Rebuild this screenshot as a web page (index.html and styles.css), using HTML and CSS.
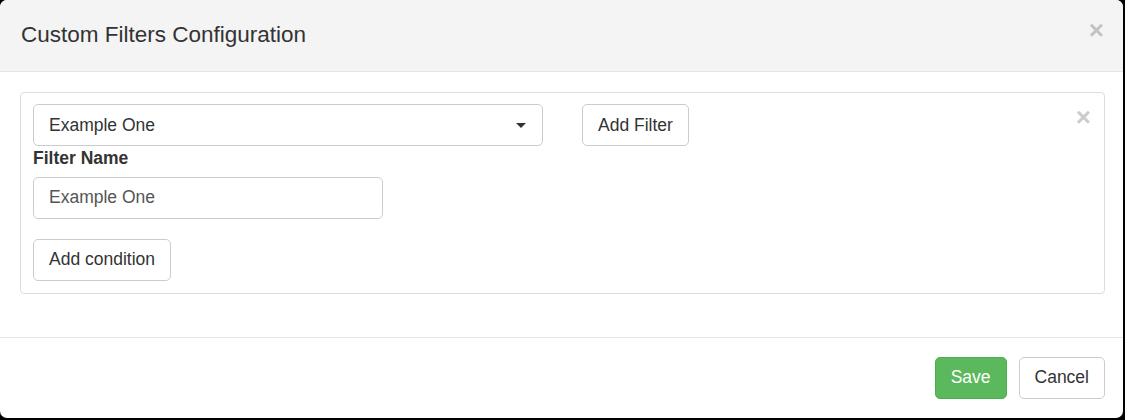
FILE: index.html
```html
<!DOCTYPE html>
<html lang="en">
<head>
    <meta charset="UTF-8">
    <meta name="viewport" content="width=device-width, initial-scale=1.0">
    <title>Custom Filters</title>
    <link rel="stylesheet" href="styles.css">
</head>
<body>
    <div class="modal">
        <div class="modal-header">
            <button class="close">&times;</button>
            <h4 class="modal-title">Custom Filters Configuration</h4>
        </div>

        <div class="modal-body">
            <div class="panel">
                <button class="close close-panel">&times;</button>
                <div class="top-row">
                    <div class="select">
                        <span>Example One</span>
                        <span class="caret"></span>
                    </div>
                    <button class="btn">Add Filter</button>
                </div>
                <label class="label">Filter Name</label>
                <input type="text" class="input" placeholder="Example One">
                <div class="conditions">
                    <button class="btn">Add condition</button>
                </div>
            </div>
        </div>

        <div class="modal-footer">
            <button class="btn btn-success">Save</button>
            <button class="btn">Cancel</button>
        </div>
    </div>
</body>
</html>
```

FILE: styles.css
```css
body {
    margin: 0;
    background-color: #000;
    font-family: "Liberation Sans", Arial, sans-serif;
    font-size: 17.5px;
    line-height: 1.42857;
    color: #333;
}
.modal {
    width: 1123px;
    background-color: #fff;
    border-radius: 7px;
    overflow: hidden;
}
.modal-header {
    background-color: #f4f4f4;
    border-bottom: 1px solid #e5e5e5;
    padding: 19px 19px 20px 21px;
}
.modal-title {
    margin: 0;
    font-size: 22.5px;
    font-weight: normal;
    line-height: 32px;
}
.close {
    float: right;
    padding: 0;
    border: none;
    background: none;
    font-family: "Liberation Sans", Arial, sans-serif;
    font-size: 26px;
    font-weight: bold;
    line-height: 1;
    color: #000;
    opacity: 0.2;
    cursor: pointer;
    margin-top: -2px;
}
.modal-body {
    padding: 20px 18px 43px 20px;
}
.panel {
    border: 1px solid #ddd;
    border-radius: 4px;
    padding: 11px 12px 12px 12px;
}
.close-panel {
    margin-top: 0;
    margin-right: 1px;
}
.top-row {
    display: flex;
    align-items: center;
    gap: 39px;
}
.select {
    width: 510px;
    height: 42px;
    box-sizing: border-box;
    border: 1px solid #ccc;
    border-radius: 5px;
    padding: 0 15px;
    display: flex;
    align-items: center;
    justify-content: space-between;
}
.caret {
    width: 0;
    height: 0;
    border-top: 5px solid #333;
    border-left: 5px solid transparent;
    border-right: 5px solid transparent;
    margin-right: 1px;
}
.btn {
    height: 42px;
    box-sizing: border-box;
    padding: 0 15px;
    border: 1px solid #ccc;
    border-radius: 5px;
    background-color: #fff;
    color: #333;
    font-family: "Liberation Sans", Arial, sans-serif;
    font-size: 17.5px;
    cursor: pointer;
}
.btn-success {
    background-color: #5cb85c;
    border-color: #4cae4c;
    color: #fff;
}
.label {
    display: block;
    font-weight: bold;
    margin-bottom: 6px;
}
.input {
    display: block;
    width: 350px;
    height: 42px;
    box-sizing: border-box;
    border: 1px solid #ccc;
    border-radius: 5px;
    padding: 0 15px;
    font-family: "Liberation Sans", Arial, sans-serif;
    font-size: 17.5px;
    color: #555;
}
.input::placeholder {
    color: #555;
}
.conditions {
    margin-top: 20px;
}
.modal-footer {
    border-top: 1px solid #e5e5e5;
    padding: 19px 18px 19px 19px;
    display: flex;
    justify-content: flex-end;
    gap: 12px;
}
```
